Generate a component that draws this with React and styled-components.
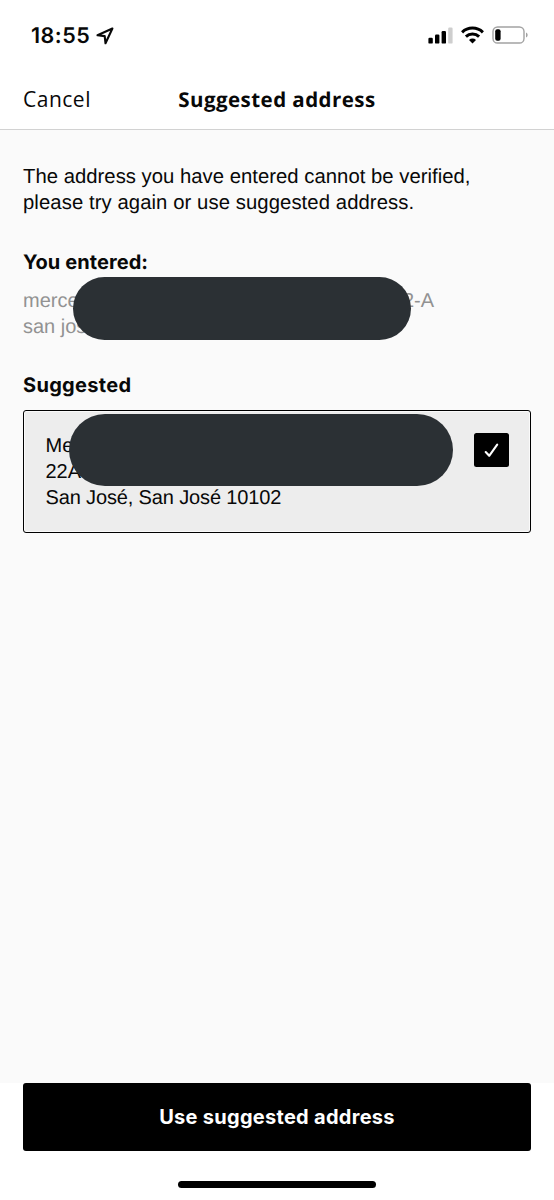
import React from "react";
import styled, { createGlobalStyle } from "styled-components";

const Global = createGlobalStyle`
  * { box-sizing: border-box; }
  body { margin: 0; background: #fff; text-rendering: geometricPrecision; }
`;

const Screen = styled.div`
  width: 554px;
  height: 1200px;
  display: flex;
  flex-direction: column;
  overflow: hidden;
  background: #fff;
  color: #080808;
  font-family: "Liberation Sans", Arial, sans-serif;
`;

const StatusBar = styled.div`
  height: 70px;
  padding: 0 26px 0 31px;
  display: flex;
  align-items: center;
  justify-content: space-between;
`;

const TimeGroup = styled.div`
  display: flex;
  align-items: center;
  gap: 6px;
  padding-top: 2px;
`;

const Time = styled.span`
  font: 600 21.5px/26px Inter, sans-serif;
  letter-spacing: 0.5px;
`;

const Indicators = styled.div`
  display: flex;
  align-items: center;
  gap: 8px;
`;

const NavBar = styled.header`
  height: 60px;
  padding: 0 23px;
  border-bottom: 1px solid #d2d2d2;
  display: grid;
  grid-template-columns: 1fr auto 1fr;
  align-items: center;
  line-height: 26px;
`;

const CancelButton = styled.button`
  justify-self: start;
  padding: 0 0 1px;
  border: 0;
  background: none;
  color: inherit;
  font: 400 21px/26px "Open Sans", sans-serif;
  letter-spacing: 0.5px;
`;

const Title = styled.h1`
  margin: 0;
  font: 700 20.5px/26px "Open Sans", sans-serif;
  letter-spacing: 0.45px;
`;

const Content = styled.main`
  flex: 1;
  padding: 35px 23px 0;
  background: #fafafa;
`;

const Paragraph = styled.p`
  margin: 0;
  font-size: 20.3px;
  line-height: 25.6px;
`;

const TextLine = styled.span`
  display: block;
  white-space: nowrap;
  letter-spacing: ${(p) => p.$track || "0"};
`;

const Heading = styled.h2`
  margin: ${(p) => p.$top} 0 0;
  font: 700 20px/26px Inter, sans-serif;
  letter-spacing: ${(p) => p.$track || "0"};
`;

const Entered = styled.div`
  position: relative;
  margin-top: 12px;
  padding-top: 2px;
  color: #929292;
  font-size: 20px;
  line-height: 25.6px;
`;

const SplitLine = styled.div`
  width: 411px;
  display: flex;
  justify-content: space-between;
`;

const Redaction = styled.div`
  position: absolute;
  left: ${(p) => p.$left};
  top: ${(p) => p.$top};
  width: ${(p) => p.$width};
  height: ${(p) => p.$height};
  border-radius: 40px;
  background: #2b3034;
`;

const AddressCard = styled.section`
  position: relative;
  height: 123px;
  margin-top: 12px;
  padding: 21px 21px 0;
  display: flex;
  align-items: flex-start;
  justify-content: space-between;
  border: 1.5px solid #000;
  border-radius: 3px;
  background: #ededed;
  box-shadow: inset 0 0 0 1px #fafafa;
  font-size: 20px;
  line-height: 25.6px;
`;

const AddressText = styled.div`
  padding: 2px 0 0 0.5px;
`;

const Checkbox = styled.div`
  width: 35px;
  height: 34px;
  margin-top: 1px;
  display: flex;
  align-items: center;
  justify-content: center;
  border-radius: 2.5px;
  background: #000;
`;

const Footer = styled.footer`
  height: 117px;
  padding: 0 23px;
  display: flex;
  flex-direction: column;
  align-items: center;
`;

const PrimaryButton = styled.button`
  width: 100%;
  height: 68px;
  padding: 0;
  border: 0;
  border-radius: 3px;
  background: #000;
  color: #fff;
  font: 700 20px/26px Inter, sans-serif;
  letter-spacing: 0.28px;
`;

const HomeIndicator = styled.div`
  width: 198px;
  height: 7px;
  margin-top: 30px;
  border-radius: 4px;
  background: #000;
`;

const LocationIcon = () => (
  <svg width="18" height="18" viewBox="0 0 18 18" fill="none" stroke="#080808" strokeWidth="2.1" strokeLinejoin="round">
    <path d="M16.4 1.5 1.5 8.3l7.2.8.8 7.2z" />
  </svg>
);

const SignalIcon = () => (
  <svg width="25" height="18" viewBox="0 0 25 18">
    <rect x="0.4" y="11.8" width="4.4" height="5.8" rx="1.2" />
    <rect x="7" y="8.6" width="4.4" height="9" rx="1.2" />
    <rect x="13.6" y="5.1" width="4.4" height="12.5" rx="1.2" />
    <rect x="20.2" y="1.6" width="4.4" height="16" rx="1.2" fill="#cecece" />
  </svg>
);

const WifiIcon = () => (
  <svg width="23" height="18" viewBox="0 0 23 18">
    <g fill="none" stroke="#000" strokeWidth="3">
      <path d="M1.1 6.3a15 15 0 0 1 20.8 0" />
      <path d="M4.9 10.6a9.5 9.5 0 0 1 13.2 0" />
    </g>
    <path d="M8 14a5 5 0 0 1 7 0l-3.5 3.5z" />
  </svg>
);

const BatteryIcon = () => (
  <svg width="36" height="18" viewBox="0 0 36 18">
    <rect x="1" y="1" width="31" height="16" rx="4.6" fill="#fff" stroke="#a2a2a2" strokeWidth="1.4" />
    <rect x="3.2" y="3.2" width="5.4" height="11.6" rx="2" />
    <path d="M34 6.5c2.2.8 2.2 4.2 0 5z" fill="#a2a2a2" />
  </svg>
);

const CheckIcon = () => (
  <svg width="15" height="15" viewBox="0 0 15 15" fill="none" stroke="#fff" strokeWidth="2.1" strokeLinecap="round" strokeLinejoin="round">
    <path d="M1.7 9 5.2 12.8 13.2 1.6" />
  </svg>
);

export default function App() {
  return (
    <Screen>
      <Global />
      <StatusBar>
        <TimeGroup>
          <Time>18:55</Time>
          <LocationIcon />
        </TimeGroup>
        <Indicators>
          <SignalIcon />
          <WifiIcon />
          <BatteryIcon />
        </Indicators>
      </StatusBar>
      <NavBar>
        <CancelButton>Cancel</CancelButton>
        <Title>Suggested address</Title>
      </NavBar>
      <Content>
        <Paragraph>
          <TextLine $track="0.02px">The address you have entered cannot be verified,</TextLine>
          <TextLine $track="0.08px">please try again or use suggested address.</TextLine>
        </Paragraph>
        <Heading $top="33px" $track="0.08px">You entered:</Heading>
        <Entered>
          <SplitLine>
            <span>merce</span>
            <span>2-A</span>
          </SplitLine>
          <TextLine>san jos</TextLine>
          <Redaction $left="50px" $top="-10px" $width="338px" $height="63px" />
        </Entered>
        <Heading $top="32px" $track="0.3px">Suggested</Heading>
        <AddressCard>
          <AddressText>
            <TextLine>Me</TextLine>
            <TextLine>22A</TextLine>
            <TextLine $track="-0.14px">San José, San José 10102</TextLine>
          </AddressText>
          <Checkbox role="checkbox" aria-checked="true">
            <CheckIcon />
          </Checkbox>
          <Redaction $left="45px" $top="3px" $width="384px" $height="72px" />
        </AddressCard>
      </Content>
      <Footer>
        <PrimaryButton>Use suggested address</PrimaryButton>
        <HomeIndicator />
      </Footer>
    </Screen>
  );
}
